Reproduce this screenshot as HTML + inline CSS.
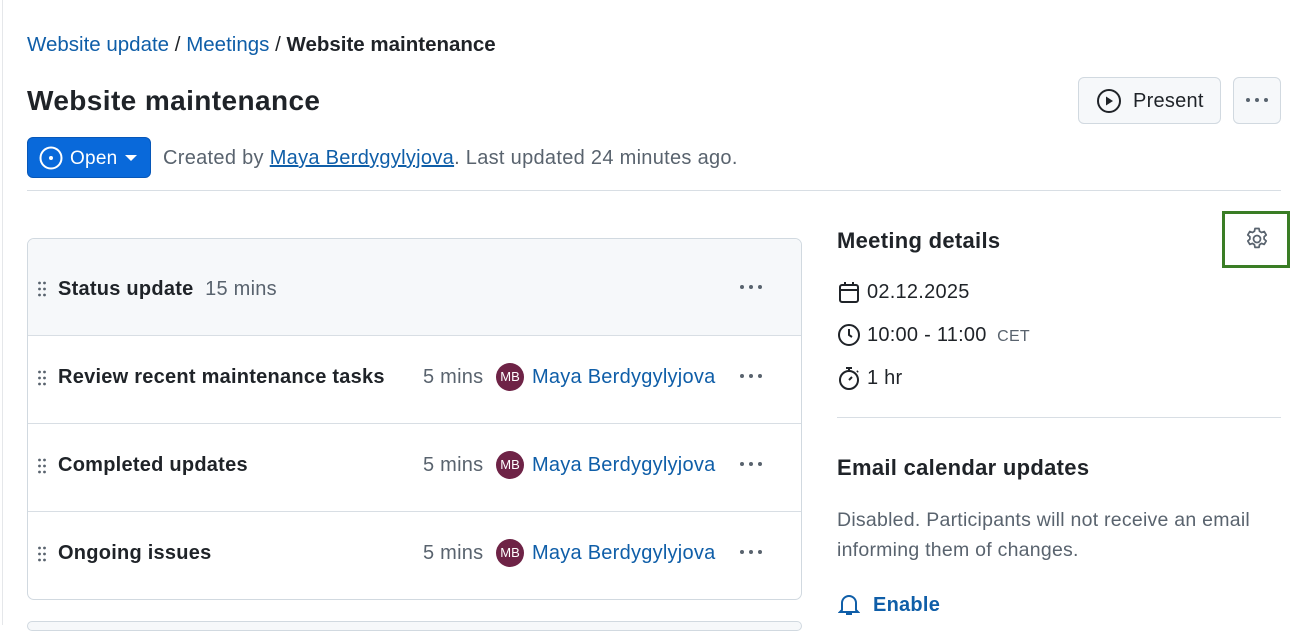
<!DOCTYPE html>
<html><head><meta charset="utf-8"><style>
*{box-sizing:border-box;margin:0;padding:0}
body{width:1303px;height:625px;overflow:hidden;background:#fff;font-family:"Liberation Sans",sans-serif;color:#1f2328;position:relative;letter-spacing:0.25px}
.a{position:absolute;white-space:nowrap}
.link{color:#0f5ea8}
.muted{color:#59636e}
.drag{position:absolute;left:9px;width:10px;height:16px}
.row{position:absolute;left:0;right:0;height:88px;border-top:1px solid #d8dee4}
.row .t{position:absolute;left:30px;top:30px;font-size:20px;font-weight:bold}
.row .m{position:absolute;left:395px;top:30px;font-size:20px;color:#59636e}
.row .av{position:absolute;left:468px;top:27px;width:28px;height:28px;border-radius:50%;background:#6e2346;color:#fff;font-size:13px;text-align:center;line-height:28px;letter-spacing:0}
.row .n{position:absolute;left:504px;top:30px;font-size:20px;color:#0f5ea8}
.dots{position:absolute;width:26px;height:6px}
</style></head><body>
<svg width="0" height="0" style="position:absolute"><defs><g id="d"><circle cx="3" cy="3" r="2" fill="#59636e"/><circle cx="12" cy="3" r="2" fill="#59636e"/><circle cx="21" cy="3" r="2" fill="#59636e"/></g><g id="h" fill="#59636e"><circle cx="2.5" cy="2" r="1.4"/><circle cx="7.5" cy="2" r="1.4"/><circle cx="2.5" cy="8" r="1.4"/><circle cx="7.5" cy="8" r="1.4"/><circle cx="2.5" cy="14" r="1.4"/><circle cx="7.5" cy="14" r="1.4"/></g></defs></svg>
<div class="a" style="left:2px;top:0;width:1px;height:625px;background:#e5e7ea"></div>
<div class="a" style="left:27px;top:33px;font-size:20.5px;letter-spacing:0"><span class="link">Website update</span> / <span class="link">Meetings</span> / <b>Website maintenance</b></div>
<div class="a" style="left:27px;top:85px;font-size:28px;font-weight:bold;letter-spacing:0.4px">Website maintenance</div>
<div class="a" style="left:1078px;top:77px;width:143px;height:47px;border:1px solid #d1d9e0;border-radius:6px;background:#f6f8fa;font-size:20px;padding:12px 0 0 54px">Present</div>
<svg class="a" style="left:1096px;top:88px" width="26" height="26" viewBox="0 0 26 26"><circle cx="13" cy="13" r="11" fill="none" stroke="#1f2328" stroke-width="2"/><path d="M10 8.5v9l7-4.5z" fill="#1f2328"/></svg>
<div class="a" style="left:1233px;top:77px;width:48px;height:47px;border:1px solid #d1d9e0;border-radius:6px;background:#f6f8fa"></div>
<svg class="dots" style="left:1245px;top:97px"><use href="#d"/></svg>
<div class="a" style="left:27px;top:137px;width:124px;height:41px;border-radius:6px;background:#0969da;border:1px solid #0757b8;color:#fff;font-size:19px;padding:10px 0 0 42px">Open</div>
<svg class="a" style="left:38px;top:145px" width="26" height="26" viewBox="0 0 26 26"><circle cx="13" cy="13" r="10.5" fill="none" stroke="#fff" stroke-width="2"/><circle cx="13" cy="13" r="2" fill="#fff"/></svg>
<svg class="a" style="left:125px;top:154px" width="12" height="8"><path d="M0 1h12L6 7z" fill="#fff"/></svg>
<div class="a muted" style="left:163px;top:147px;font-size:20px;letter-spacing:0.3px">Created by <span style="color:#0f5ea8;text-decoration:underline">Maya Berdygylyjova</span>. Last updated 24 minutes ago.</div>
<div class="a" style="left:27px;top:190px;width:1254px;height:1px;background:#d8dee4"></div>

<div class="a" style="left:27px;top:238px;width:775px;height:362px;border:1px solid #d1d9e0;border-radius:7px;overflow:hidden">
 <div style="position:absolute;left:0;right:0;top:0;height:97px;background:#f6f8fa"></div>
 <svg class="drag" style="top:42px" viewBox="0 0 10 16"><use href="#h"/></svg>
 <div class="a" style="left:30px;top:39px;font-size:20px"><b>Status update</b> <span class="muted">&nbsp;15 mins</span></div>
 <svg class="dots" style="left:711px;top:45px"><use href="#d"/></svg>
 <div class="row" style="top:96px"><svg class="drag" style="top:34px" viewBox="0 0 10 16"><use href="#h"/></svg><div class="t">Review recent maintenance tasks</div><div class="m">5 mins</div><div class="av">MB</div><div class="n">Maya Berdygylyjova</div><svg class="dots" style="left:711px;top:37px"><use href="#d"/></svg></div>
 <div class="row" style="top:184px"><svg class="drag" style="top:34px" viewBox="0 0 10 16"><use href="#h"/></svg><div class="t">Completed updates</div><div class="m">5 mins</div><div class="av">MB</div><div class="n">Maya Berdygylyjova</div><svg class="dots" style="left:711px;top:37px"><use href="#d"/></svg></div>
 <div class="row" style="top:272px"><svg class="drag" style="top:34px" viewBox="0 0 10 16"><use href="#h"/></svg><div class="t">Ongoing issues</div><div class="m">5 mins</div><div class="av">MB</div><div class="n">Maya Berdygylyjova</div><svg class="dots" style="left:711px;top:37px"><use href="#d"/></svg></div>
</div>
<div class="a" style="left:27px;top:621px;width:775px;height:10px;border:1px solid #d1d9e0;border-radius:7px;background:#f6f8fa"></div>

<div class="a" style="left:837px;top:228px;font-size:22px;font-weight:bold;letter-spacing:0.3px">Meeting details</div>
<div class="a" style="left:1222px;top:211px;width:68px;height:57px;border:3px solid #3a7d25"></div>
<svg class="a" style="left:1243px;top:225px" width="28" height="28" viewBox="0 0 24 24" fill="none" stroke="#59636e" stroke-width="1.5"><circle cx="12" cy="12" r="3"/><path d="M10.3 3h3.4l.5 2.4 1.7 1 2.3-.8 1.7 2.9-1.8 1.6v2l1.8 1.6-1.7 2.9-2.3-.8-1.7 1-.5 2.4h-3.4l-.5-2.4-1.7-1-2.3.8-1.7-2.9 1.8-1.6v-2L4.1 8.5l1.7-2.9 2.3.8 1.7-1z" stroke-linejoin="round"/></svg>
<svg class="a" style="left:837px;top:280px" width="24" height="24" viewBox="0 0 24 24" fill="none" stroke="#1f2328" stroke-width="2"><rect x="3" y="5" width="18" height="17" rx="2"/><path d="M3 10h18M8 2v4M16 2v4"/></svg>
<div class="a" style="left:867px;top:281px;font-size:20px">02.12.2025</div>
<svg class="a" style="left:837px;top:323px" width="24" height="24" viewBox="0 0 24 24" fill="none" stroke="#1f2328" stroke-width="2"><circle cx="12" cy="12" r="10"/><path d="M12 6v6l3 2"/></svg>
<div class="a" style="left:867px;top:324px;font-size:20px">10:00 - 11:00 <span class="muted" style="font-size:16px">&nbsp;CET</span></div>
<svg class="a" style="left:837px;top:365px" width="24" height="26" viewBox="0 0 24 26" fill="none" stroke="#1f2328" stroke-width="2"><circle cx="12" cy="15" r="9"/><path d="M9 3h6M12 3v3M12 15l3-3M20 7l1-1"/></svg>
<div class="a" style="left:867px;top:367px;font-size:20px">1 hr</div>
<div class="a" style="left:837px;top:417px;width:444px;height:1px;background:#d8dee4"></div>
<div class="a" style="left:837px;top:455px;font-size:22px;font-weight:bold;letter-spacing:0.3px">Email calendar updates</div>
<div class="a muted" style="left:837px;top:505px;font-size:19.5px;line-height:30px;white-space:normal;width:450px">Disabled. Participants will not receive an email informing them of changes.</div>
<svg class="a" style="left:838px;top:593px" width="22" height="24" viewBox="0 0 22 24" fill="none" stroke="#0f5ea8" stroke-width="2"><path d="M4 17V10a7 7 0 0 1 14 0v7l2 2H2z M8 21h6"/></svg>
<div class="a" style="left:873px;top:594px;font-size:20px;font-weight:bold;color:#0f5ea8">Enable</div>
</body></html>
